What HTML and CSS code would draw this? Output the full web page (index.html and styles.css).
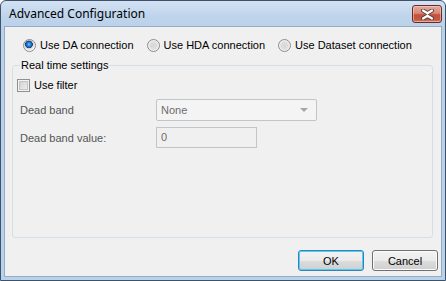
FILE: index.html
```html
<!DOCTYPE html>
<html>
<head>
<meta charset="utf-8">
<link rel="stylesheet" href="styles.css">
</head>
<body>
<div class="window">
  <div class="titlebar">
    <span class="title">Advanced Configuration</span>
    <button class="close" aria-label="Close">
      <svg width="15" height="11" viewBox="0 0 15 11">
        <path d="M3 1.5 L7.5 4.3 L12 1.5 M3 9.5 L7.5 6.7 L12 9.5" fill="none" stroke="#5a3a36" stroke-width="4" stroke-linecap="round" stroke-linejoin="round"/>
        <path d="M3 1.5 L7.5 4.3 L12 1.5 M3 9.5 L7.5 6.7 L12 9.5" fill="none" stroke="#ffffff" stroke-width="2.2" stroke-linecap="round" stroke-linejoin="round"/>
      </svg>
    </button>
  </div>
  <div class="client">
    <div class="radios">
      <label class="opt"><input type="radio" name="conn" checked><span>Use DA connection</span></label>
      <label class="opt"><input type="radio" name="conn"><span>Use HDA connection</span></label>
      <label class="opt"><input type="radio" name="conn"><span>Use Dataset connection</span></label>
    </div>
    <fieldset class="group">
      <legend>Real time settings</legend>
      <label class="check"><input type="checkbox"><span>Use filter</span></label>
      <div class="form">
        <span class="lbl">Dead band</span>
        <div class="select"><span>None</span><i class="arrow"></i></div>
        <span class="lbl">Dead band value:</span>
        <div class="textbox">0</div>
      </div>
    </fieldset>
    <div class="buttons">
      <button class="btn default">OK</button>
      <button class="btn">Cancel</button>
    </div>
  </div>
</div>
</body>
</html>
```
FILE: styles.css
```css
* { box-sizing: border-box; }
html, body { margin: 0; padding: 0; }
body {
  width: 446px;
  height: 281px;
  overflow: hidden;
  font-family: "Liberation Sans", Arial, sans-serif;
  font-size: 11px;
  color: #000;
  background: #fff;
}
.window {
  width: 446px;
  height: 281px;
  border: 1px solid #3f526b;
  border-radius: 6px 6px 0 0;
  background: linear-gradient(#d3e2f3 0px, #c0d5ec 14px, #b9d1ea 26px, #b9d1ea 100%);
  padding: 0 3px 3px;
  display: flex;
  flex-direction: column;
}
.titlebar {
  height: 25px;
  display: flex;
  align-items: flex-start;
  justify-content: space-between;
  padding-left: 5px;
}
.title {
  font-family: "Noto Sans", "Open Sans", sans-serif;
  font-size: 12px;
  line-height: 16px;
  margin-top: 5px;
  color: #000;
}
.close {
  margin: 4px 0 0 0;
  width: 30px;
  height: 18px;
  padding: 0;
  border: 1px solid #6b2a22;
  border-radius: 3px;
  background: linear-gradient(#e3a99c 0%, #d68a7a 45%, #c4503a 55%, #c25a44 85%, #d4826c 100%);
  box-shadow: inset 0 0 0 1px rgba(255, 220, 210, 0.5);
  display: flex;
  align-items: center;
  justify-content: center;
}
.client {
  flex: 1;
  background: #f0f0f0;
  border: 1px solid #97abc3;
  display: flex;
  flex-direction: column;
}
.radios {
  display: flex;
  padding: 11px 0 0 18px;
  gap: 13px;
  height: 25px;
}
.opt, .check {
  display: flex;
  align-items: center;
  gap: 4px;
  height: 14px;
  line-height: 13px;
}
input[type=radio] {
  appearance: none;
  -webkit-appearance: none;
  margin: 0;
  width: 13px;
  height: 13px;
  border-radius: 50%;
  border: 1px solid #8a8c8e;
  background: radial-gradient(circle at 50% 50%, #d8d8d8 0, #dcdcdc 3px, #e8e8e8 4.5px, #f8f8f8 6px);
  flex: none;
}
input[type=radio]:checked {
  background: radial-gradient(circle at 45% 40%, #7fc8ff 0, #2f8ae0 1.5px, #1c62b0 2.8px, #0f3f78 3.6px, #d4d4d4 4.1px, #e6e6e6 5px, #f8f8f8 6px);
}
.group {
  margin: 7px 8px 0 7px;
  padding: 6px 0 0 4px;
  border: 1px solid #d5dfe5;
  border-radius: 3px;
  height: 179px;
  min-width: 0;
}
.group legend {
  padding: 0 1px;
  margin-left: 3px;
  line-height: 13px;
}
.check input {
  appearance: none;
  -webkit-appearance: none;
  margin: 0;
  width: 13px;
  height: 13px;
  border: 1px solid #8e8f8f;
  background: linear-gradient(135deg, #cbcbcb, #f4f4f4);
  box-shadow: inset 0 0 0 1px #f4f4f4, inset 0 0 0 2px #c4c4c4;
  flex: none;
}
.form {
  display: grid;
  grid-template-columns: 136px auto;
  grid-template-rows: 22px 21px;
  row-gap: 6px;
  align-items: center;
  margin: 7px 0 0 3px;
}
.lbl { color: #555555; }
.select {
  width: 161px;
  height: 22px;
  border: 1px solid #c2c5c8;
  border-radius: 2px;
  background: #f4f4f4;
  display: flex;
  align-items: center;
  justify-content: space-between;
  padding: 0 8px 0 4px;
  color: #6d6d6d;
}
.arrow {
  width: 0;
  height: 0;
  border-left: 4px solid transparent;
  border-right: 4px solid transparent;
  border-top: 4px solid #a5a5a5;
}
.textbox {
  width: 101px;
  height: 21px;
  border: 1px solid #c2c5c8;
  background: #f0f0f0;
  padding: 0 4px;
  line-height: 19px;
  color: #6d6d6d;
}
.buttons {
  display: flex;
  justify-content: flex-end;
  gap: 8px;
  margin-top: 12px;
  padding-right: 3px;
}
.btn {
  width: 66px;
  height: 21px;
  padding: 0;
  font-family: "Liberation Sans", Arial, sans-serif;
  font-size: 11px;
  color: #000;
  border: 1px solid #707070;
  border-radius: 3px;
  background: linear-gradient(#f2f2f2 0%, #ebebeb 50%, #dddddd 50%, #cfcfcf 100%);
  box-shadow: inset 0 0 0 1px #fbfbfb;
}
.btn.default {
  border-color: #3c7fb1;
  box-shadow: inset 0 0 0 1px #48d1fe;
}
```
